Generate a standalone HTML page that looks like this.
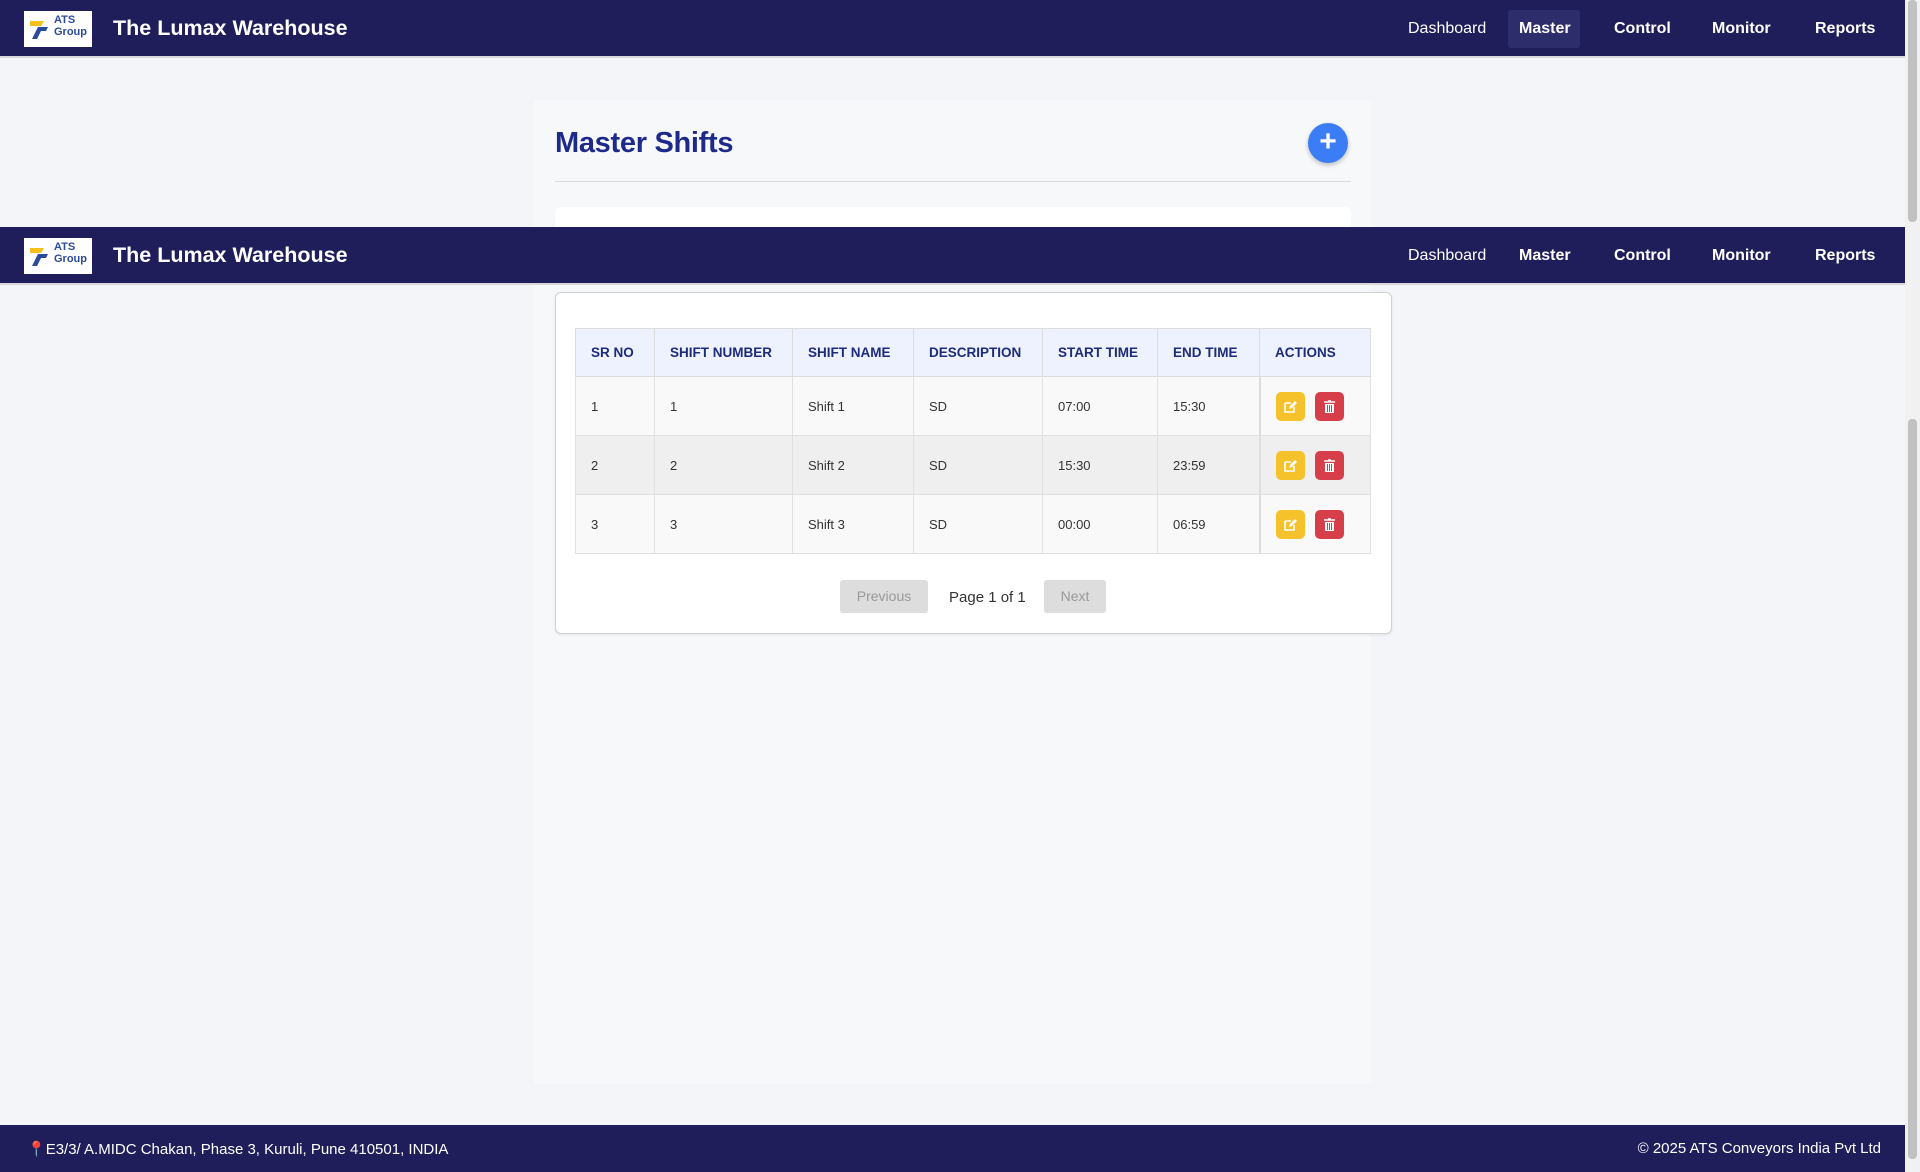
<!DOCTYPE html>
<html><head><meta charset="utf-8"><style>
*{box-sizing:border-box;margin:0;padding:0}
body{width:1920px;height:1172px;overflow:hidden;background:#f3f5f8;font-family:"Liberation Sans",sans-serif;position:relative}
.hdr{position:absolute;left:0;width:1905px;height:58px;background:#1f1e5a;border-bottom:2px solid #d8d8dc}
.logo{position:absolute;left:24px;top:11px;width:68px;height:36px;background:#fff}
.logo .t{position:absolute;left:30px;top:3px;font-size:11px;line-height:12px;color:#2b4a9a;font-weight:bold}
.ttl{position:absolute;left:113px;top:16px;color:#fff;font-size:21.5px;font-weight:bold}
.nav{position:absolute;top:20px;color:#fff;font-size:16px}
.nav.b{font-weight:bold}
.mst{position:absolute;left:1508px;top:10px;width:72px;height:38px;background:#2e2d6b;border-radius:3px}
.panel{position:absolute;left:534px;top:100px;width:837px;height:984px;background:#f7f8fa}
.foot{position:absolute;left:0;top:1125px;width:1905px;height:47px;background:#1f1e5a;color:#fff;font-size:15px}
table{border-collapse:collapse;position:absolute;left:575px;top:328px;width:796px;font-size:13px;color:#333}
th{background:#eef2fe;color:#1e2a7a;font-weight:bold;text-align:left;padding-left:15px;height:48px;border:1px solid #dcdcdc;font-size:13.5px}
td{padding-left:15px;height:59px;border:1px solid #e0e0e0;background:#f9f9f9}
tr.alt td{background:#efefef}
.ic{display:inline-block;width:29px;height:29px;border-radius:5px;vertical-align:middle;position:relative}
.ic svg{position:absolute;left:8px;top:8px}
</style></head><body>
<div class="panel">
  <div style="position:absolute;left:21px;top:27px;font-size:29px;font-weight:bold;color:#1e2a8a;letter-spacing:-0.3px">Master Shifts</div>
  <div style="position:absolute;left:774px;top:23px;width:40px;height:40px;border-radius:50%;background:#3b7df5;box-shadow:0 2px 5px rgba(0,0,0,.25);color:#fff;font-size:30px;font-weight:bold;text-align:center;line-height:38px">+</div>
  <div style="position:absolute;left:21px;top:81px;width:796px;height:1px;background:#dcdcdf"></div>
  <div style="position:absolute;left:21px;top:107px;width:796px;height:60px;background:#fff;border-radius:6px"></div>
</div>
<div style="position:absolute;left:555px;top:292px;width:837px;height:342px;background:#fff;border:1px solid #d2d2d2;border-radius:6px;box-shadow:0 1px 3px rgba(0,0,0,.08)"></div>
<table>
<tr><th style="width:79px">SR NO</th><th style="width:138px">SHIFT NUMBER</th><th style="width:121px">SHIFT NAME</th><th style="width:129px">DESCRIPTION</th><th style="width:115px">START TIME</th><th style="width:102px">END TIME</th><th>ACTIONS</th></tr>
<tr><td>1</td><td>1</td><td>Shift 1</td><td>SD</td><td>07:00</td><td>15:30</td><td style="border-left:2px solid #ddd"><span class="ic" style="background:#f6c22c"><svg width="13" height="13"><path d="M1 3h6M1 3v9h9V7" stroke="#fff" stroke-width="1.6" fill="none"/><path d="M5 9l1-3 5-5 2 2-5 5z" fill="#fff"/></svg></span>&nbsp;&nbsp;&nbsp;<span class="ic" style="background:#d63e4a"><svg width="13" height="13"><path d="M1 2h11M5 1h3" stroke="#fff" stroke-width="1.6"/><path d="M2 4h9v9H2z" fill="#fff"/><path d="M4.5 5v7M6.5 5v7M8.5 5v7" stroke="#d63e4a"/></svg></span></td></tr>
<tr class="alt"><td>2</td><td>2</td><td>Shift 2</td><td>SD</td><td>15:30</td><td>23:59</td><td style="border-left:2px solid #ddd"><span class="ic" style="background:#f6c22c"><svg width="13" height="13"><path d="M1 3h6M1 3v9h9V7" stroke="#fff" stroke-width="1.6" fill="none"/><path d="M5 9l1-3 5-5 2 2-5 5z" fill="#fff"/></svg></span>&nbsp;&nbsp;&nbsp;<span class="ic" style="background:#d63e4a"><svg width="13" height="13"><path d="M1 2h11M5 1h3" stroke="#fff" stroke-width="1.6"/><path d="M2 4h9v9H2z" fill="#fff"/><path d="M4.5 5v7M6.5 5v7M8.5 5v7" stroke="#d63e4a"/></svg></span></td></tr>
<tr><td>3</td><td>3</td><td>Shift 3</td><td>SD</td><td>00:00</td><td>06:59</td><td style="border-left:2px solid #ddd"><span class="ic" style="background:#f6c22c"><svg width="13" height="13"><path d="M1 3h6M1 3v9h9V7" stroke="#fff" stroke-width="1.6" fill="none"/><path d="M5 9l1-3 5-5 2 2-5 5z" fill="#fff"/></svg></span>&nbsp;&nbsp;&nbsp;<span class="ic" style="background:#d63e4a"><svg width="13" height="13"><path d="M1 2h11M5 1h3" stroke="#fff" stroke-width="1.6"/><path d="M2 4h9v9H2z" fill="#fff"/><path d="M4.5 5v7M6.5 5v7M8.5 5v7" stroke="#d63e4a"/></svg></span></td></tr>
</table>
<div style="position:absolute;left:840px;top:580px;width:88px;height:33px;background:#ddd;border-radius:3px;color:#999;font-size:14px;text-align:center;line-height:33px">Previous</div>
<div style="position:absolute;left:949px;top:589px;font-size:15px;color:#333">Page 1 of 1</div>
<div style="position:absolute;left:1044px;top:580px;width:62px;height:33px;background:#ddd;border-radius:3px;color:#999;font-size:14px;text-align:center;line-height:33px">Next</div>

<div class="hdr" style="top:0">
  <div class="logo"><svg width="30" height="36" style="position:absolute;left:2px;top:0"><path d="M4 10h14l-3 5H4z" fill="#f5c01b"/><path d="M6 28l6-12h10l-2 4h-5l-4 8z" fill="#2b4a9a"/></svg><div class="t">ATS<br>Group</div></div>
  <div class="ttl">The Lumax Warehouse</div>
  <div class="nav" style="left:1408px">Dashboard</div>
  <div class="mst"></div><div class="nav b" style="left:1519px">Master</div>
  <div class="nav b" style="left:1614px">Control</div>
  <div class="nav b" style="left:1712px">Monitor</div>
  <div class="nav b" style="left:1815px">Reports</div>
</div>
<div class="hdr" style="top:227px">
  <div class="logo"><svg width="30" height="36" style="position:absolute;left:2px;top:0"><path d="M4 10h14l-3 5H4z" fill="#f5c01b"/><path d="M6 28l6-12h10l-2 4h-5l-4 8z" fill="#2b4a9a"/></svg><div class="t">ATS<br>Group</div></div>
  <div class="ttl">The Lumax Warehouse</div>
  <div class="nav" style="left:1408px">Dashboard</div>
  <div class="nav b" style="left:1519px">Master</div>
  <div class="nav b" style="left:1614px">Control</div>
  <div class="nav b" style="left:1712px">Monitor</div>
  <div class="nav b" style="left:1815px">Reports</div>
</div>
<div class="foot"><div style="position:absolute;left:27px;top:15px"><span style="color:#e33">📍</span>E3/3/ A.MIDC Chakan, Phase 3, Kuruli, Pune 410501, INDIA</div><div style="position:absolute;right:24px;top:15px">© 2025 ATS Conveyors India Pvt Ltd</div></div>
<div style="position:absolute;left:1905px;top:0;width:15px;height:1172px;background:#f1f1f1"></div>
<div style="position:absolute;left:1908px;top:0;width:9px;height:222px;background:#c1c1c1;border-radius:4px"></div>
<div style="position:absolute;left:1908px;top:419px;width:9px;height:740px;background:#c1c1c1;border-radius:4px"></div>
</body></html>
